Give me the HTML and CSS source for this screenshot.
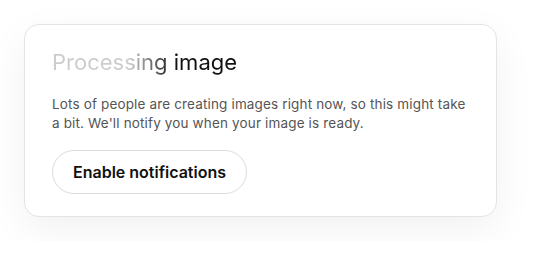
FILE: index.html
```html
<!DOCTYPE html>
<html lang="en">
<head>
  <meta charset="UTF-8" />
  <meta name="viewport" content="width=device-width, initial-scale=1.0" />
  <title>Processing image</title>
  <link rel="stylesheet" href="styles.css">
</head>
<body>
  <div class="card">
    <h1 class="title"><span class="shimmer">Processing image</span></h1>
    <p class="desc">Lots of people are creating images right now, so this might take a bit. We'll notify you when your image is ready.</p>
    <button class="notify-btn">Enable notifications</button>
  </div>
</body>
</html>
```

FILE: styles.css
```css
* {
  margin: 0;
  padding: 0;
  box-sizing: border-box;
  font-family: 'Inter', sans-serif;
}
html, body {
  background: #fff;
}
body {
  padding: 24px;
}

.card {
  width: 473px;
  padding: 23px 27px 22px;
  border: 1px solid #e4e4e4;
  border-radius: 15px;
  background: #fff;
  box-shadow: 0 12px 40px rgba(0, 0, 0, 0.06);
  display: flex;
  flex-direction: column;
  align-items: flex-start;
}

.title {
  font-size: 22px;
  font-weight: 400;
  line-height: 28px;
}

.shimmer {
  background: linear-gradient(90deg, #cccccc 0, #cccccc 42%, #111 66%, #111 100%);
  -webkit-background-clip: text;
  background-clip: text;
  -webkit-text-fill-color: transparent;
}

.desc {
  margin-top: 19px;
  font-size: 13.5px;
  line-height: 19px;
  letter-spacing: 0.15px;
  color: #555;
}

.notify-btn {
  flex-shrink: 0;
  margin-top: 17px;
  height: 44px;
  padding: 0 20px;
  border: 1px solid #dcdcdc;
  border-radius: 22px;
  background: #fff;
  color: #111;
  font-size: 16px;
  font-weight: 600;
  cursor: pointer;
}
```
